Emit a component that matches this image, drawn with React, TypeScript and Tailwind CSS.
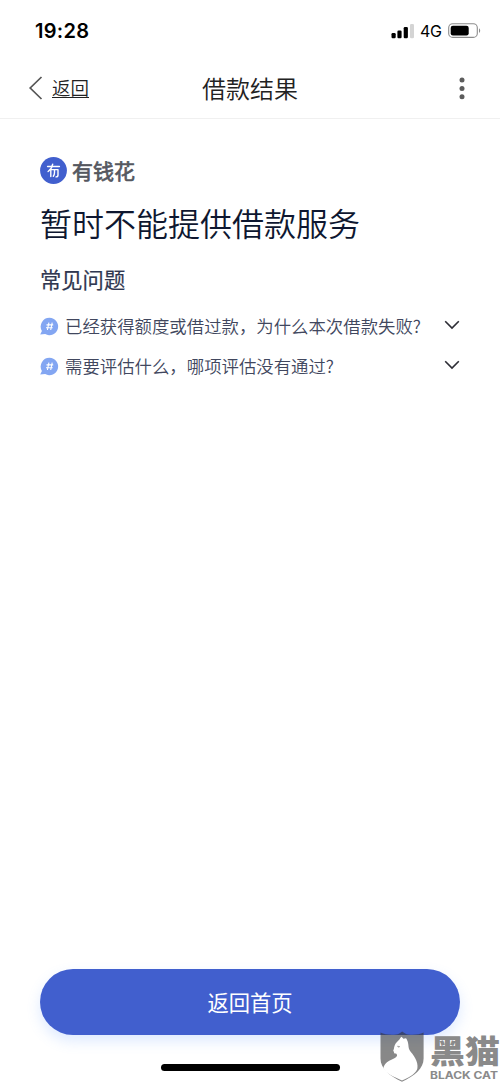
const questions = [
  "已经获得额度或借过款，为什么本次借款失败?",
  "需要评估什么，哪项评估没有通过?",
];

function StatusBar() {
  return (
    <div className="flex h-[60px] items-center justify-between pt-[2px] pr-[19px] pl-[35px]">
      <span className="font-[Inter] text-[20px] leading-none font-semibold tracking-[0.3px] text-black">
        19:28
      </span>
      <div className="flex items-center">
        <svg width="24" height="16" viewBox="0 0 24 16" className="mr-[5px]">
          <rect x="0.5" y="10" width="4.2" height="5.2" rx="1.2" />
          <rect x="6.4" y="7.5" width="4.2" height="7.7" rx="1.2" />
          <rect x="12.7" y="4" width="4.2" height="11.2" rx="1.2" />
          <rect x="19" y="1" width="4" height="14.2" rx="1.2" fill="#d4d4d4" />
        </svg>
        <span className="mr-[6px] w-[22px] font-[Inter] text-[16px] leading-none tracking-[-0.3px] text-black">
          4G
        </span>
        <svg width="33" height="16" viewBox="0 0 33 16">
          <rect x="0.7" y="0.8" width="28.6" height="13.6" rx="4" fill="none" stroke="#8c8c8c" strokeWidth="1.1" />
          <rect x="2.7" y="2.8" width="18" height="9.6" rx="2.2" />
          <path d="M31 5.3c1.6.8 1.6 4 0 4.8z" fill="#8c8c8c" />
        </svg>
      </div>
    </div>
  );
}

function NavBar() {
  return (
    <header className="grid h-[59px] grid-cols-[1fr_auto_1fr] items-center border-b border-[#f0f0f0] pb-[2px]">
      <a className="flex items-center pl-[28px] text-[18.5px] leading-none font-[350] text-[#222]">
        <svg width="16" height="26" viewBox="0 0 16 26" className="mr-[8px]">
          <path d="M13.5 2 2.2 13l11.3 11" fill="none" stroke="#555" strokeWidth="1.7" />
        </svg>
        <span className="border-b border-[#222]">返回</span>
      </a>
      <h1 className="pb-px text-[24px] leading-none font-[350] whitespace-nowrap text-[#222]">
        借款结果
      </h1>
      <svg width="8" height="24" viewBox="0 0 8 24" className="mr-[34px] justify-self-end" fill="#5c5c5c">
        <circle cx="4" cy="4" r="2.5" />
        <circle cx="4" cy="12.4" r="2.5" />
        <circle cx="4" cy="20.8" r="2.5" />
      </svg>
    </header>
  );
}

function Brand() {
  return (
    <div className="flex h-[27px] items-center">
      <svg width="27" height="27" viewBox="0 0 27 27" className="mr-[5px]">
        <circle cx="13.5" cy="13.5" r="13.4" fill="#415fce" />
        <g fill="none" stroke="#fff" strokeWidth="1.4" strokeLinecap="round" strokeLinejoin="round">
          <path d="M7.6 9.5h11.8" />
          <path d="M12.7 7.2c-.6 3.1-2.1 5.5-4.6 7.3" />
          <path d="M10.8 12.6v7" />
          <path d="M10.8 12.6h7.2v5.3c0 1.4-.6 2-2 2" />
          <path d="M14.5 12.8v2.6c0 1.6-.4 2.8-1.2 3.8" />
        </g>
      </svg>
      <span className="pb-px text-[21px] leading-none font-normal text-[#55575f] [-webkit-text-stroke:0.7px_#55575f]">
        有钱花
      </span>
    </div>
  );
}

function Question({ text }: { text: string }) {
  return (
    <li className="flex h-10 items-center">
      <svg width="19" height="19" viewBox="0 0 19 19" className="mr-[6px]">
        <path d="M9.5.8a8.7 8.7 0 1 1-4.3 16.3L.2 17.6l1.7-3.7A8.7 8.7 0 0 1 9.5.8z" fill="#83a6f2" />
        <path d="M8.9 5.7 7.4 13M12.2 5.7 10.7 13M6.5 7.9h6.7M6 10.8h6.7" stroke="#fff" strokeWidth="1.1" />
      </svg>
      <span className="flex-1 pb-px text-[17.4px] leading-none font-[350] whitespace-nowrap text-[#41475e]">
        {text}
      </span>
      <svg width="16" height="10" viewBox="0 0 16 10" className="relative -top-px">
        <path d="m1.2 1.2 6.8 6.9 6.8-6.9" fill="none" stroke="#2d2d35" strokeWidth="1.6" />
      </svg>
    </li>
  );
}

function Watermark() {
  return (
    <div className="absolute right-0 bottom-0 flex h-[51px] w-[120px] text-[#8a8a8a]">
      <svg width="45" height="51" viewBox="0 0 45 51">
        <path
          d="M.5 1.5c4 2.2 11 2.5 15.5 2 2.2-.2 4.4-1.5 6.2-3 1.8 1.5 4 2.8 6.2 3 5 .5 11 .2 15.2-2v26c0 10-9 17.5-21.6 23.3C9.5 45 .5 37.5.5 27.5z"
          fill="#323232"
          fillOpacity="0.58"
        />
        <path
          d="M21.3 5.7c1 .6 1.6 1.2 2.1 2l2.6-.4c.8 1 1.6 2.6 2 4.4.7 2.7.2 5 1.5 7.3 1.5 2.8 4.2 4.8 5.7 8.2 1.8 3.6 2.7 6.7 2.2 10.1-.6 4-6 8.3-15.4 12.2C13 45.5 5.5 42 3.3 37.2c.6-3.3 2.6-5.8 5.9-7.5 2.9-1.5 5.9-2.1 7.6-4.4.6-1 .1-2-.7-2.8-1.5.3-2.2-.3-2.1-1.6-.8-.7-1-1.7-.2-2.7.5-3 1.2-5.7 3.4-7.500 1.800-1.500 2.800-3.100 4.100-5z"
          fill="#fff"
        />
        <path d="m17.3 15.3 2.2.2-.8 1.100" fill="none" stroke="#8a8a8a" strokeWidth="0.8" />
      </svg>
      <div className="ml-[5px] flex flex-col pt-[5px]">
        <span className="h-[31px] w-[70px] origin-top scale-y-[0.9] text-[35px] leading-[30px] font-black whitespace-nowrap">
          黑猫
        </span>
        <span className="mt-[4px] h-[9px] origin-left scale-x-[1.2] font-[Inter] text-[10px] leading-[9px] font-bold whitespace-nowrap">
          BLACK CAT
        </span>
      </div>
    </div>
  );
}

export default function App() {
  return (
    <div className="relative flex h-[1082px] w-[500px] flex-col overflow-hidden bg-white font-['Noto_Sans_CJK_SC',sans-serif]">
      <StatusBar />
      <NavBar />
      <main className="flex-1 px-10 pt-[38px]">
        <Brand />
        <h2 className="mt-[22px] text-[32px] leading-[32px] font-[350] whitespace-nowrap text-[#0e1730]">
          暂时不能提供借款服务
        </h2>
        <h3 className="mt-[30px] text-[21.3px] leading-[21px] font-normal text-[#303750] [-webkit-text-stroke:0.2px_#303750]">
          常见问题
        </h3>
        <ul className="mt-[17px]">
          {questions.map((q) => (
            <Question key={q} text={q} />
          ))}
        </ul>
      </main>
      <footer className="flex flex-col items-center px-10 pb-[11px]">
        <button className="h-[66px] w-full rounded-full bg-[#415fce] pb-px text-[21.3px] font-normal text-white shadow-[0_6px_14px_rgba(90,150,255,0.2)]">
          返回首页
        </button>
        <div className="mt-[29px] h-[7px] w-[179px] rounded-full bg-black" />
      </footer>
      <Watermark />
    </div>
  );
}
